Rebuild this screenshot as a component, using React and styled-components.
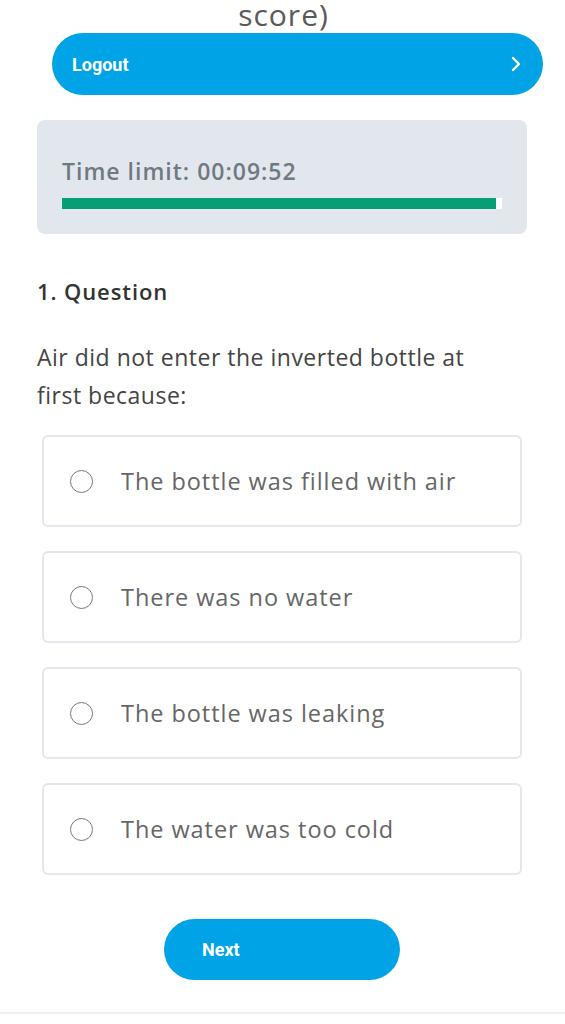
import React from "react";
import styled, { createGlobalStyle } from "styled-components";

const Global = createGlobalStyle`
  html, body { margin: 0; padding: 0; background: #fff; }
  body { font-family: "Open Sans", "Lato", sans-serif; }
  * { box-sizing: border-box; }
`;

const Page = styled.div`
  width: 565px;
  min-height: 1024px;
  display: flex;
  flex-direction: column;
  overflow: hidden;
`;

const ScoreTail = styled.div`
  text-align: center;
  font-size: 30px;
  letter-spacing: 1px;
  line-height: 30px;
  height: 30px;
  color: #5a5a5a;
  padding-left: 2px;
`;

const PillButton = styled.button`
  display: flex;
  align-items: center;
  justify-content: space-between;
  border: none;
  border-radius: 999px;
  background: #00a4e6;
  color: #fff;
  font-family: "Roboto", "Liberation Sans", sans-serif;
  font-weight: 700;
  font-size: 18px;
  height: ${(p) => p.$h}px;
  width: ${(p) => p.$w}px;
  padding: 0 ${(p) => p.$pr}px 0 ${(p) => p.$pl}px;
  margin: ${(p) => p.$m};
  cursor: pointer;
`;

const TimerBox = styled.div`
  margin: 25px 38px 0 37px;
  background: #e2e7ee;
  border-radius: 8px;
  padding: 36px 25px 25px 25px;
  display: flex;
  flex-direction: column;
`;

const TimerText = styled.div`
  font-size: 23px;
  font-weight: 600;
  letter-spacing: 1px;
  color: #6f7a80;
  line-height: 30px;
`;

const Track = styled.div`
  margin-top: 12px;
  height: 11px;
  background: #fff;
  width: 440px;
`;

const Fill = styled.div`
  height: 100%;
  background: #079e76;
`;

const Content = styled.div`
  padding: 0 40px 0 37px;
  display: flex;
  flex-direction: column;
`;

const QLabel = styled.div`
  margin-top: 42px;
  font-size: 22px;
  font-weight: 600;
  letter-spacing: 0.9px;
  color: #333;
  line-height: 30px;
`;

const QText = styled.div`
  margin-top: 32px;
  max-width: 460px;
  font-size: 23px;
  letter-spacing: 0.5px;
  color: #444;
  line-height: 38px;
`;

const Options = styled.div`
  margin-top: 21px;
  display: flex;
  flex-direction: column;
  gap: 24px;
  padding-left: 5px;
  margin-right: 3px;
`;

const Option = styled.label`
  display: flex;
  align-items: center;
  height: 92px;
  border: 2px solid #e3e8ee;
  border-radius: 6px;
  padding-left: 26px;
  cursor: pointer;
`;

const Radio = styled.span`
  width: 23px;
  height: 23px;
  border-radius: 50%;
  border: 1.6px solid #777;
  background: #fff;
  flex: none;
`;

const OptText = styled.span`
  margin-left: 28px;
  font-size: 23.5px;
  letter-spacing: 0.95px;
  color: #666;
`;

const Footer = styled.div`
  display: flex;
  justify-content: flex-start;
  padding-left: 164px;
  margin-top: 44px;
`;

const BottomRule = styled.div`
  margin-top: 32px;
  height: 2px;
  background: #f0f0f0;
`;

const options = [
  "The bottle was filled with air",
  "There was no water",
  "The bottle was leaking",
  "The water was too cold",
];

export default function App() {
  const progress = 98.6;
  return (
    <Page>
      <Global />
      <ScoreTail>score)</ScoreTail>
      <PillButton $h={62} $w={491} $pl={20} $pr={20} $m="3px 0 0 52px">
        <span>Logout</span>
        <svg width="14" height="18" viewBox="0 0 14 18" fill="none">
          <path d="M4 3 L10 9 L4 15" stroke="#fff" strokeWidth="2.4" strokeLinecap="round" strokeLinejoin="round" />
        </svg>
      </PillButton>
      <TimerBox>
        <TimerText>Time limit: 00:09:52</TimerText>
        <Track>
          <Fill style={{ width: `${progress}%` }} />
        </Track>
      </TimerBox>
      <Content>
        <QLabel>1. Question</QLabel>
        <QText>Air did not enter the inverted bottle at first because:</QText>
        <Options>
          {options.map((o) => (
            <Option key={o}>
              <Radio />
              <OptText>{o}</OptText>
            </Option>
          ))}
        </Options>
      </Content>
      <Footer>
        <PillButton $h={61} $w={236} $pl={38} $pr={20} $m="0">
          <span>Next</span>
        </PillButton>
      </Footer>
      <BottomRule />
    </Page>
  );
}
